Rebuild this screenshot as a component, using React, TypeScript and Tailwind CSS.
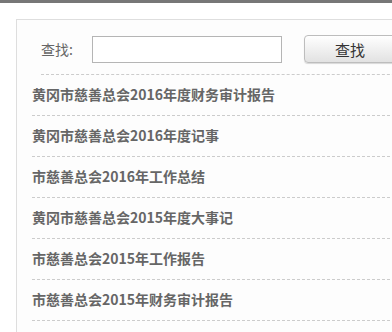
import React from 'react';

const items = [
  '黄冈市慈善总会2016年度财务审计报告',
  '黄冈市慈善总会2016年度记事',
  '市慈善总会2016年工作总结',
  '黄冈市慈善总会2015年度大事记',
  '市慈善总会2015年工作报告',
  '市慈善总会2015年财务审计报告',
];

export default function App() {
  return (
    <div
      className="w-[392px] h-[332px] overflow-hidden bg-white"
      style={{ fontFamily: '"Microsoft YaHei", "Noto Sans CJK SC", "Noto Sans", sans-serif' }}
    >
      <div className="h-[3px] bg-[#777]" />
      <div className="mt-[16px] ml-[16px] w-[420px] h-[400px] border border-[#dedede] bg-[#fdfdfd] pl-[15px] pt-[15px]">
        <div className="ml-[9px] flex items-center h-[28px]">
          <span className="text-[14px] text-[#666] w-[51px] leading-none">查找:</span>
          <input
            type="text"
            className="w-[190px] h-[27px] mt-[1px] border border-[#b5b5b5] bg-white outline-none"
          />
          <button className="ml-[22px] w-[92px] h-[28px] rounded-[4px] border border-[#bdbdbd] bg-gradient-to-b from-white to-[#e2e2e2] shadow-[0_1px_1px_rgba(0,0,0,0.15)] text-[15px] text-[#333] leading-none">
            查找
          </button>
        </div>
        <div className="ml-[9px] mt-[11px] border-b border-dashed border-[#ccc]" />
        <ul>
          {items.map((t) => (
            <li
              key={t}
              className="h-[41px] flex items-center border-b border-dashed border-[#ccc] text-[14px] font-bold text-[#666]"
            >
              <span className="-mt-[1px]">{t}</span>
            </li>
          ))}
        </ul>
      </div>
    </div>
  );
}
